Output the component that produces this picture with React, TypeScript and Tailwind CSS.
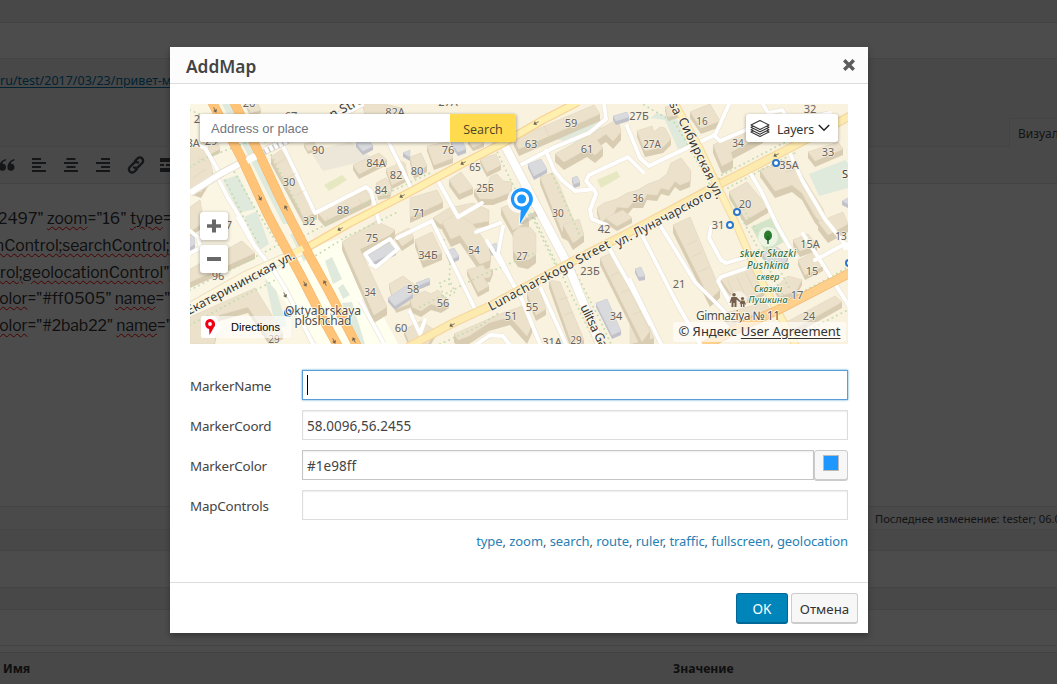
import React from "react";

type Pt = [number, number];

const ROOF = "#ece2cc";
const WALL = "#d8ccb2";
const GRAY_ROOF = "#d9dade";
const GRAY_WALL = "#c0c1c9";

function parse(s: string): Pt[] {
  return s.split(" ").map((p) => p.split(",").map(Number) as Pt);
}

function Building({ points, depth = 5, gray = false }: { points: string; depth?: number; gray?: boolean }) {
  const pts = parse(points);
  const wall = gray ? GRAY_WALL : WALL;
  return (
    <g>
      {pts.map(([x, y], i) => {
        const [nx, ny] = pts[(i + 1) % pts.length];
        return (
          <polygon
            key={i}
            points={`${x},${y} ${nx},${ny} ${nx},${ny + depth} ${x},${y + depth}`}
            fill={nx < x ? wall : gray ? "#cbccd2" : "#e0d5bd"}
          />
        );
      })}
      <polygon points={points} fill={gray ? GRAY_ROOF : ROOF} stroke={gray ? "#cdced4" : "#e2d7c0"} strokeWidth="0.5" />
    </g>
  );
}

const buildings: [string, number][] = [
  ["190,147 204,142 213,172 201,192 190,188", 6],
  ["208,141 217,139 220,149 210,154", 4],
  ["190,207 200,200 204,222 190,232", 5],
  ["246,104 258,104 261,110 250,113", 3],
  ["271,157 281,150 317,212 304,218", 7],
  ["304,144 314,142 317,148 308,151", 3],
  ["318,213 366,190 371,199 325,221", 6],
  ["353,165 379,153 387,160 359,174", 5],
  ["376,183 386,178 392,186 390,194 378,196", 4],
  ["386,169 396,165 398,160 405,163 408,177 392,185", 4],
  ["363,104 385,104 401,108 401,114 365,114", 3],
  ["427,146 448,142 453,158 434,165", 5],
  ["468,140 480,137 484,143 473,147", 4],
  ["410,157 421,153 427,166 414,173", 6],
  ["410,198 437,190 443,202 410,217", 6],
  ["433,218 449,208 473,203 489,210 489,221 460,226 440,224", 5],
  ["449,180 461,172 473,188 459,194", 6],
  ["480,159 496,154 501,165 487,172", 5],
  ["474,190 488,184 490,177 497,174 503,181 512,182 511,192 493,199 480,199", 6],
  ["514,139 594,105 600,114 519,149", 7],
  ["555,154 618,119 621,132 613,141 606,134 597,140 603,148 595,155 587,149 564,162", 8],
  ["540,177 552,173 558,182 575,224 574,237 562,231", 7],
  ["501,208 516,202 529,221 513,230", 7],
  ["597,208 604,203 617,199 627,193 638,190 648,184 659,180 667,174 671,163 681,158 691,171 690,181 680,185 675,181 669,190 661,188 657,195 647,194 643,202 633,202 628,208 617,207 612,217 601,221", 6],
  ["637,131 652,126 654,132 660,127 665,128 671,139 663,147 645,151", 6],
  ["690,112 710,104 720,121 701,128", 6],
  ["665,107 673,105 678,114 668,117", 4],
  ["713,145 747,128 763,135 731,152 733,160 722,166", 8],
  ["808,152 838,142 843,149 815,161", 6],
  ["782,132 795,123 802,128 791,139", 4],
  ["760,170 784,160 799,170 823,209 830,233 815,216 802,193 792,185 775,191", 7],
  ["729,192 747,182 768,207 746,220", 6],
  ["818,222 843,212 848,224 828,235", 8],
  ["793,240 808,234 817,245 800,251", 6],
  ["798,260 815,252 823,266 805,275", 5],
  ["775,288 788,276 802,280 796,291 780,296", 5],
  ["783,324 835,296 842,302 790,331", 6],
  ["720,278 750,266 764,292 738,303", 4],
  ["722,314 765,302 770,309 730,322", 5],
  ["673,225 690,217 720,290 710,299", 8],
  ["630,303 637,300 654,338 630,344", 6],
  ["190,269 242,241 255,253 190,282", 6],
  ["190,317 255,288 283,333 270,340 248,307 219,315 214,344 190,344", 6],
  ["342,242 376,221 395,230 390,235 360,249 387,307 374,315", 8],
  ["395,235 409,228 414,238 402,246", 5],
  ["389,284 403,276 419,288 412,303 396,309", 4],
  ["415,240 432,232 442,253 423,261", 7],
  ["410,297 425,291 431,294 438,290 449,302 441,307 431,304 421,311 412,307", 6],
  ["442,222 457,214 472,223 491,250 490,260 480,264 460,235 451,239", 8],
  ["467,270 483,265 486,270 493,269 490,277 484,278 489,286 478,292", 5],
  ["513,233 519,227 530,227 536,234 536,254 528,260 518,258 513,250", 9],
  ["454,334 500,314 523,306 532,325 527,336 510,317 489,323 469,336 458,340", 8],
  ["527,293 539,288 546,309 536,315", 6],
  ["549,280 560,282 584,340 572,344", 8],
  ["563,225 579,219 584,235 573,243", 7],
  ["605,218 623,210 632,218 617,226", 5],
  ["600,258 611,253 650,331 642,342", 7],
  ["404,330 421,321 436,331 428,344 410,344", 5],
];

const grayBuildings = [
  "356,143 367,138 373,146 363,151",
  "403,153 410,150 410,157",
  "451,142 462,140 466,149 458,152",
  "528,164 541,159 547,169 534,176",
  "572,178 577,176 580,182 574,184",
  "613,116 627,112 629,117 616,121",
  "368,255 389,243 396,251 373,262",
  "388,298 406,286 413,294 395,306",
  "446,251 454,248 459,256 450,260",
  "416,283 429,278 430,281 418,286",
  "489,246 496,243 498,248 492,252",
  "596,303 607,299 621,331 612,335",
  "635,269 641,267 645,276 639,277",
  "190,238 194,235 195,244 190,247",
  "762,253 777,247 788,256 785,262 769,264",
  "842,201 848,198 848,204",
];

const minorRoads = [
  "190,142 205,148 212,160 220,174",
  "218,178 228,198 244,224 254,245 275,272 286,290 313,344",
  "238,218 252,242",
  "283,146 315,213 319,211",
  "317,212 366,187 371,191 379,222",
  "389,143 400,165 412,190",
  "437,179 458,217 482,203",
  "517,167 555,147 589,133 606,119 604,104",
  "546,151 554,170 562,180 575,191 585,190 594,189 596,194 590,210 592,219 607,225",
  "594,190 586,181 589,175 628,157 643,172",
  "627,126 640,158 649,166 674,154 715,135 721,122 729,104",
  "714,135 720,141 762,123",
  "763,104 768,113 782,110 790,121 830,113",
  "788,149 802,180 825,219 848,248",
  "749,171 761,191 777,225 795,257",
  "660,225 695,282 723,310 729,318",
  "642,235 675,300 700,344",
  "630,280 645,311 661,344",
  "711,227 709,238 721,260 726,263 747,257 754,254",
  "730,303 718,281 721,277 747,268",
  "803,234 820,260 849,306",
  "845,244 815,260",
  "848,244 845,248",
  "397,238 432,221 478,315",
  "487,241 520,295 540,344",
  "503,227 498,253 516,290",
  "476,232 500,223",
  "541,289 566,344",
  "609,248 632,289 650,324",
  "360,300 384,344",
  "410,312 420,334 425,320",
  "477,344 490,335 503,336 509,344",
  "190,253 201,248 198,237 190,231",
  "372,264 365,254 390,239 398,249 376,267 371,264",
];

const treeLines = [
  "247,106 266,145 300,211",
  "223,176 246,222 260,246",
  "232,168 253,205 279,246",
  "190,167 205,158 248,142",
  "304,236 344,215 388,193 430,173",
  "312,258 346,237 400,211",
  "190,290 238,266 280,244",
  "190,325 240,298 281,277",
  "420,307 480,276 535,253",
  "440,344 480,326 500,312",
  "491,139 512,183 531,219",
  "535,219 555,261 580,312 596,344",
  "520,191 546,246 560,274",
  "575,271 600,320 611,344",
  "590,252 638,228 700,197",
  "644,105 675,123 702,170 715,195",
  "676,106 706,163 721,181",
  "722,175 770,150 805,132",
  "728,188 765,168 795,153",
  "730,197 759,250 783,295",
  "741,205 768,249 790,289",
  "552,174 566,205 582,240",
  "444,240 450,264 449,288",
  "440,283 449,279 455,292 444,299 440,283",
  "788,299 820,283 848,267",
  "810,329 848,310",
  "190,110 201,115 216,144",
  "800,119 803,142",
];

type Lab = [string, number, number, number?];
const numbers: Lab[] = [
  ["26", 249, 103], ["67", 291, 116], ["2", 197, 119], ["82А", 395, 112], ["27А", 448, 102],
  ["28А", 190, 143], ["29", 211, 141], ["90", 318, 150], ["84А", 376, 163], ["30", 289, 182],
  ["82", 396, 175], ["84", 381, 190], ["88", 343, 210], ["32", 309, 221], ["76", 448, 150],
  ["80", 417, 171], ["65", 475, 167, 10], ["25Б", 485, 188, 10], ["71", 419, 213], ["63", 531, 144],
  ["59", 571, 123], ["61", 587, 149], ["30", 558, 213, 10], ["27Б", 639, 116], ["27А", 652, 144, 10],
  ["16", 702, 121, 10], ["32", 810, 109], ["34", 738, 143, 10], ["33", 828, 152], ["35А", 789, 165],
  ["36", 638, 198, 10], ["20", 745, 204], ["31", 718, 225], ["42", 604, 229], ["15А", 810, 244],
  ["13", 841, 236, 10], ["15", 812, 271], ["17", 797, 295], ["24", 809, 316], ["21", 679, 284],
  ["96", 218, 276], ["7", 229, 225], ["75", 372, 238], ["34Б", 428, 255], ["54", 474, 250, 10],
  ["27", 522, 256, 10], ["23Б", 590, 271], ["34", 370, 292, 10], ["58", 413, 289], ["56", 443, 303],
  ["60", 401, 328], ["51", 511, 316], ["55", 532, 307], ["34", 616, 316], ["31А", 552, 342],
  ["29", 576, 340, 10], ["29", 274, 339, 10],
];

function Circle({ x, y }: { x: number; y: number }) {
  return <circle cx={x} cy={y} r="3" fill="white" stroke="#2b78cc" strokeWidth="2" />;
}

function CityMap() {
  return (
    <svg className="block h-[240px] w-[658px]" viewBox="190 104 658 240" fontFamily="'Noto Sans', sans-serif">
      <rect x="190" y="104" width="658" height="240" fill="#f9f2df" />
      <polygon points="190,104 243,104 370,344 190,344" fill="#fbf5e4" />
      <polygon points="261,272 300,250 342,238 398,344 318,344" fill="#fffff0" />
      <g fill="#dfeadd">
        <polygon points="223,180 238,175 255,209 239,213" />
        <polygon points="244,217 257,211 269,244 260,250" />
        <polygon points="222,104 232,104 292,224 283,224" />
        <polygon points="290,234 300,234 310,252 304,262" />
        <polygon points="325,261 332,257 342,279 333,284" />
        <polygon points="338,288 343,284 350,295 343,299" />
        <polygon points="265,279 276,290 287,326 276,329" />
        <polygon points="342,303 352,302 365,344 354,344" />
        <polygon points="555,139 595,116 602,120 601,130 575,143" />
        <polygon points="657,113 677,119 689,146 678,149 665,120 650,118" />
        <polygon points="809,174 845,160 848,163 848,188 819,196" />
      </g>
      <polygon points="751,227 775,216 788,240 765,252" fill="#d4e4c8" />
      <polygon points="310,151 350,142 374,159 323,171" fill="#ece7d8" />
      <polygon points="324,185 342,175 347,180 329,191" fill="#e6e8c2" />
      <polygon points="597,180 617,171 620,177 601,188" fill="#e6e8c2" />

      <g fill="none" stroke="#ece5d5" strokeWidth="5.2" strokeLinejoin="round">
        {minorRoads.map((r, i) => <polyline key={i} points={r} />)}
      </g>
      {buildings.map(([p, d], i) => <Building key={i} points={p} depth={d} />)}
      {grayBuildings.map((p, i) => <Building key={i} points={p} depth={4} gray />)}
      <g fill="none" stroke="#c3dbae" strokeWidth="2" strokeLinecap="round" strokeDasharray="0 5">
        {treeLines.map((r, i) => <polyline key={i} points={r} />)}
      </g>
      <g fill="none" stroke="#ffffff" strokeWidth="3.8" strokeLinejoin="round" strokeLinecap="round">
        {minorRoads.map((r, i) => <polyline key={i} points={r} />)}
      </g>
      <g stroke="#d8cdb6" strokeWidth="0.5" fill="none">
        <path d="M275 165l10-6M285 179l11-6M295 196l10-6M326 216l5 8M347 204l5 8M359 199l4 8M544 126l5 10M568 116l5 10M198 158l9 4M193 178l13-9M687 245l10-5M692 257l10-5M699 272l10-5M770 168l10-4M785 172l12-3M728 281l7 17M737 277l8 18M746 273l8 17M559 300l9-3M564 315l9-3M611 276l8-4M621 293l9-4M633 315l8-4" />
      </g>

      <g fill="none">
        <polyline points="190,193 220,174 258,154 320,125 363,103" stroke="#e8e1d2" strokeWidth="8" />
        <polyline points="190,193 220,174 258,154 320,125 363,103" stroke="#fff" strokeWidth="6" />
        <path d="M264 152L328 121" stroke="#cfcbc4" strokeWidth="6" strokeDasharray="1.5 3.5" />
        <polyline points="503,142 525,184 567,263 600,344" stroke="#ece5d5" strokeWidth="10" />
        <polyline points="503,142 525,184 567,263 600,344" stroke="#fff" strokeWidth="8" />
        <polyline points="190,307 245,276 303,250" stroke="#ece1c7" strokeWidth="10" />
        <polyline points="190,307 245,276 303,250" stroke="#fff7dd" strokeWidth="8" />
        <polyline points="303,250 350,223 410,192 460,165 505,142 543,120 578,102" stroke="#f7d295" strokeWidth="8.5" />
        <polyline points="303,250 350,223 410,192 460,165 505,142 543,120 578,102" stroke="#fff0b0" strokeWidth="6" />
        <polyline points="408,347 453,323 490,306 577,259 630,232 710,189 757,165 790,148 850,116" stroke="#f4d8a2" strokeWidth="9" />
        <polyline points="408,347 453,323 490,306 577,259 630,232 710,189 757,165 790,148 850,116" stroke="#fdeaae" strokeWidth="6.5" />
        <polyline points="674,102 700,149 718,187 737,226 750,256 763,284 777,310 796,346" stroke="#f5d9a5" strokeWidth="8" />
        <polyline points="674,102 700,149 718,187 737,226 750,256 763,284 777,310 796,346" stroke="#ffefb8" strokeWidth="6" />
        <polyline points="704,346 740,327 780,309 850,273" stroke="#f0b873" strokeWidth="9.5" />
        <polyline points="704,346 740,327 780,309 850,273" stroke="#ffd08b" strokeWidth="8" />
        <g strokeLinejoin="round">
          <polyline points="212,102 243,161 267,213 277,232 300,274 322,317 339,348" stroke="#f2b871" strokeWidth="9.5" />
          <polyline points="212,102 243,161 267,213 277,232 300,274 322,317 339,348" stroke="#ffc477" strokeWidth="8.2" />
          <polyline points="234,102 258,151 280,198 293,224 309,255 331,295 358,348" stroke="#f2b871" strokeWidth="9.5" />
          <polyline points="234,102 258,151 280,198 293,224 309,255 331,295 358,348" stroke="#ffc477" strokeWidth="8.2" />
        </g>
        <path d="M247 161L256 156.500" stroke="#fff" strokeWidth="6" />
        <path d="M294 253L303 248" stroke="#fff0b0" strokeWidth="6" />
      </g>
      <g fill="#6b6354">
        {[[215,110,62],[260,198,62],[286,208,242],[305,284,62],[325,283,242],[334,341,62],[354,340,242],[285,295,62],[340,229,152],[402,196,152],[536,123,152],[463,163,152],[452,325,152],[776,155,152]].map(([x, y, r], i) => (
          <g key={i} transform={`translate(${x} ${y}) rotate(${r})`}>
            <path d="M-3-.4h3v-1.8l3 2.2-3 2.2V.4h-3z" />
          </g>
        ))}
      </g>

      <g fill="#68635c" textAnchor="middle" stroke="#f7f1e3" strokeWidth="1.4" paintOrder="stroke" strokeLinejoin="round">
        {numbers.map(([t, x, y, s], i) => (
          <text key={i} x={x} y={y + 4} fontSize={s ?? 11}>{t}</text>
        ))}
      </g>

      <g fill="#353535" stroke="#fbf5e4" strokeWidth="2" paintOrder="stroke" fontSize="12.5">
        <text transform="translate(332 119) rotate(-27)" textLength="36">n Stre</text>
        <text transform="translate(189 315) rotate(-28)" textLength="121">Екатерининская ул.</text>
        <text transform="translate(491 311) rotate(-28)" textLength="136">Lunacharskogo Street</text>
        <text transform="translate(618 247) rotate(-28)" textLength="107">ул. Луначарского</text>
        <text transform="translate(669 104) rotate(64)" textLength="13">sa</text>
        <text transform="translate(678 120) rotate(64)" textLength="89">Сибирская ул.</text>
        <text transform="translate(580 307) rotate(64)" textLength="52">ulitsa Gaz</text>
        <text x="842" y="178" fontSize="11">S</text>
      </g>
      <Circle x={776} y={163} />
      <Circle x={737} y={212} />
      <Circle x={730} y={225} />
      <Circle x={849} y={263} />
      <Circle x={288} y={313} />
      <g textAnchor="middle" fill="#4d4d4d" stroke="#fffdf2" strokeWidth="1.6" paintOrder="stroke" fontSize="12">
        <text x="323" y="315" textLength="76">Oktyabrskaya</text>
        <text x="323" y="325" textLength="57">ploshchad</text>
        <text x="738" y="320" textLength="84">Gimnaziya № 11</text>
      </g>
      <circle cx="768" cy="237" r="10" fill="#f0f5e7" opacity=".9" />
      <ellipse cx="768" cy="235.5" rx="4" ry="5" fill="#2b7b2c" />
      <path d="M767.3 236h1.4v8h-1.4zM765.7 238l2.3 2 2-2-2 4z" fill="#1e5f26" />
      <g textAnchor="middle" fill="#1c6535" stroke="#f7f5e7" strokeWidth="1.8" paintOrder="stroke" fontStyle="italic" fontSize="10">
        <text x="768" y="257" textLength="56">skver Skazki</text>
        <text x="768" y="269" textLength="42">Pushkina</text>
        <text x="768" y="280" fontSize="9" textLength="23">сквер</text>
        <text x="768" y="292" fontSize="9" textLength="28">Сказки</text>
        <text x="768" y="303" fontSize="9" textLength="39">Пушкина</text>
      </g>
      <circle cx="738" cy="300" r="9" fill="#f8f3e7" opacity=".85" />
      <g fill="#765f4d">
        <circle cx="734" cy="294.7" r="1.8" />
        <path d="M731.5 297h5l4 4-1 1-3-2.5v7.5h-2v-4h-1v4h-2v-6l-1 2h-1z" />
        <circle cx="742.5" cy="298.5" r="1.6" />
        <path d="M740.5 300.5h4l1.500 4h-1l-.5-1v3.500h-1.400v-3h-1v3h-1.400v-3.500l-1 .5z" />
      </g>
      <path d="M519.5 224.5L521 212A11.5 11.5 0 1 1 527.5 209C526 213 523 219 519.5 224.5z" fill="#fff" opacity=".8" stroke="#fff" strokeWidth="2" />
      <path d="M519.8 224L535 211l3 5-14 8z" fill="#716a56" opacity=".25" />
      <path d="M519.8 224L520.8 210A11 11 0 1 1 530 206.5C527.5 211 524 217 519.8 224z" fill="#1e98ff" />
      <circle cx="521.6" cy="199" r="7.6" fill="#fff" />
      <circle cx="521.6" cy="199" r="4.5" fill="#1e98ff" />
    </svg>
  );
}

function MapPanel() {
  return (
    <div className="relative h-[240px] w-[658px] overflow-hidden">
      <CityMap />
      <div className="absolute left-[10px] top-[10px] flex h-7 w-[316px] rounded-[3px] shadow-[0_1px_3px_1px_rgba(0,0,0,0.25)]">
        <div className="flex h-7 w-[250px] items-center rounded-l-[2px] bg-white pl-[11px] pt-[2px] font-['Liberation_Sans',sans-serif] text-[13px] text-[#6f7781]">Address or place</div>
        <button className="flex h-7 w-[66px] items-center justify-center rounded-r-[3px] bg-[#ffdb4d] pt-[4px] font-['Open_Sans',sans-serif] text-[12.5px] text-[#4c4326]">Search</button>
      </div>
      <button className="absolute left-[556px] top-[10px] flex h-7 w-[92px] items-center rounded-[3px] bg-white pl-1 text-[12.5px] text-[#333] shadow-[0_1px_3px_1px_rgba(0,0,0,0.2)]">
        <svg className="h-5 w-5" viewBox="0 0 20 20" fill="white" stroke="#333" strokeWidth="1.1" strokeLinejoin="round">
          <path d="M1 14l9-4.500 9 4.500-9 4.500z" />
          <path d="M1 11.700l9-4.500 9 4.500-9 4.500z" />
          <path d="M1 9.300l9-4.500 9 4.500-9 4.500z" />
          <path d="M1 7l9-4.500L19 7l-9 4.500z" />
        </svg>
        <span className="ml-[7px] pt-[4px] tracking-[-0.2px]">Layers</span>
        <svg className="ml-[4px] h-3 w-3" viewBox="0 0 12 12" fill="none" stroke="#222" strokeWidth="1.5"><path d="M.8 3L6 8.200 11.200 3" /></svg>
      </button>
      <button className="absolute left-[10px] top-[108px] flex h-7 w-7 items-center justify-center rounded-[3px] bg-white shadow-[0_1px_3px_1px_rgba(0,0,0,0.2)]">
        <svg className="h-[14px] w-[14px]" viewBox="0 0 14 14" fill="#686868"><path d="M0 5h5V0h4v5h5v4H9v5H5V9H0z" transform="translate(0 .5) scale(1 .93)" /></svg>
      </button>
      <button className="absolute left-[10px] top-[141px] flex h-7 w-7 items-center justify-center rounded-[3px] bg-white shadow-[0_1px_3px_1px_rgba(0,0,0,0.2)]">
        <span className="h-1 w-[14px] bg-[#686868]" />
      </button>
      <div className="absolute left-[11px] top-[212px] flex h-[22px] w-[90px] items-center rounded-[3px] bg-white/60">
        <svg className="h-[22px] w-[21px] shrink-0" viewBox="0 0 21 22">
          <path d="M2 0h12l6 11-6 11H2Q0 22 0 20V2Q0 0 2 0z" fill="#fff" />
          <path d="M8.500 19l-.4-6A5 5 0 1 1 12.800 11.500C11.500 14 10 16.500 8.500 19z" fill="#f00012" />
          <circle cx="9" cy="8" r="1.900" fill="#fff" />
        </svg>
        <span className="ml-[9px] font-['Liberation_Sans',sans-serif] text-[11px] leading-none text-black">Directions</span>
      </div>
      <div className="absolute left-[483px] top-[218px] flex h-5 w-[173px] items-center justify-center gap-1 whitespace-nowrap rounded-[3px] bg-white/65 text-[13px] tracking-[-0.03px] text-[#333]">
        <span>© Яндекс</span><span className="underline underline-offset-2">User Agreement</span>
      </div>
    </div>
  );
}

function Spell({ children }: { children: React.ReactNode }) {
  return <span className="underline decoration-[#f00] decoration-wavy decoration-[1px] underline-offset-[2px]">{children}</span>;
}

function AlignIcon({ kind }: { kind: "left" | "center" | "right" }) {
  const x = kind === "left" ? 0 : kind === "center" ? 2.5 : 5;
  return (
    <svg className="h-[14px] w-[14px] shrink-0" viewBox="0 0 14 14" fill="#444a52">
      <path d="M0 4h14v2H0zM0 12h14v2H0z" />
      <rect x={x} y="0" width="9" height="2" />
      <rect x={x} y="8" width="9" height="2" />
    </svg>
  );
}

function EditorPage() {
  return (
    <div className="flex h-full flex-col bg-[#f1f1f1] text-[#444]">
      <div className="h-[23px] shrink-0 border-b border-[#ddd]" />
      <div className="h-[36px] shrink-0 border-b border-[#e3e3e3] bg-white" />
      <div className="flex h-[88px] shrink-0 flex-col justify-between">
        <div className="mt-[12px] whitespace-nowrap text-[12.500px] leading-5 text-[#0073aa] underline underline-offset-2">ru/test/2017/03/23/привет-мир/</div>
        <div className="flex h-[29px]">
          <div className="w-[1009px] border-b border-[#e5e5e5]" />
          <div className="w-[48px] overflow-hidden whitespace-nowrap border-l border-t border-[#e5e5e5] bg-[#f5f5f5] pl-2 pt-[6px] text-[12px] leading-[18px] text-[#444]">Визуально</div>
        </div>
      </div>
      <div className="flex h-[37px] shrink-0 items-center border-b border-[#ddd] bg-[#f5f5f5]">
        <svg className="h-3 w-[15px] shrink-0" viewBox="0 0 15 12" fill="#444a52">
          <path d="M6 0C2 1-1 4-1 8a3.500 3.500 0 1 0 3.500-3.300C2.700 3 4 1.800 6 1.500zM14.500 0C10.500 1 7.500 4 7.500 8a3.500 3.500 0 1 0 3.500-3.300c.2-1.700 1.500-2.900 3.500-3.200z" />
        </svg>
        <div className="ml-[17px] flex gap-[18px]">
          <AlignIcon kind="left" /><AlignIcon kind="center" /><AlignIcon kind="right" />
        </div>
        <svg className="ml-[17px] h-[18px] w-[18px] shrink-0" viewBox="0 0 18 18" fill="none" stroke="#444a52" strokeWidth="2.400" strokeLinecap="round">
          <path d="M8 5l2.500-2.500a3.200 3.200 0 0 1 4.700 4.500L11 11.200a3.200 3.200 0 0 1-4 .2M10 13l-2.500 2.500a3.200 3.200 0 0 1-4.700-4.500L7 6.800a3.200 3.200 0 0 1 4-.2" />
        </svg>
        <svg className="ml-[15px] h-[14px] w-4 shrink-0" viewBox="0 0 16 14" fill="#444a52">
          <path d="M0 0h16v4H0zM0 6h4v2H0zM6 6h4v2H6zM12 6h4v2h-4zM0 10h16v4H0z" />
        </svg>
      </div>
      <div className="h-[322px] shrink-0 whitespace-nowrap bg-white pt-[22px] font-['Libre_Franklin','Inter',sans-serif] text-[15.700px] leading-[26.800px] text-[#333]">
        <div className="-ml-[2px]">2497" <Spell>zoom</Spell>="16" <Spell>type</Spell>="map"</div>
        <div className="-ml-[5px]"><Spell>nControl;searchControl;</Spell></div>
        <div className="-ml-[6px]"><Spell>trol;geolocationControl</Spell>"]</div>
        <div className="-ml-[9px] tracking-[-0.1px]"><Spell>color</Spell>="#ff0505" <Spell>name</Spell>="one"</div>
        <div className="-ml-[9px] tracking-[-0.1px]"><Spell>color</Spell>="#2bab22" <Spell>name</Spell>="two"</div>
      </div>
      <div className="flex h-[24px] shrink-0 items-center whitespace-nowrap border-y border-[#e5e5e5] bg-[#f7f7f7] pl-[875px] pt-[2px] text-[11.150px] leading-none text-[#444]">Последнее изменение: tester; 06.04.2017</div>
      <div className="h-[20px] shrink-0" />
      <div className="h-[38px] shrink-0 border-y border-[#e3e3e3] bg-white" />
      <div className="h-[21px] shrink-0" />
      <div className="h-[37px] shrink-0 border-y border-[#e3e3e3] bg-white" />
      <div className="h-[6px] shrink-0 bg-[#fdfdfd]" />
      <div className="flex h-[32px] shrink-0 items-center border-t border-[#ddd] bg-[#f0f0f0] pt-[2px] text-[12.200px] font-bold text-[#333]">
        <span className="w-[670px] pl-[3px]">Имя</span><span className="pl-[3px]">Значение</span>
      </div>
    </div>
  );
}

function Row({ label, children }: { label: string; children: React.ReactNode }) {
  return (
    <div className="flex h-[30px] items-center">
      <label className="w-[112px] pt-[3px] text-[13.400px] tracking-[-0.2px] text-[#444]">{label}</label>
      <div className="flex w-[546px]">{children}</div>
    </div>
  );
}

const fieldText = "flex h-[30px] items-center border bg-white px-1 pt-[2px] text-[13.500px] tracking-[0.05px] text-[#444] shadow-[inset_0_1px_2px_rgba(0,0,0,0.07)]";

export default function App() {
  const controls = ["type", "zoom", "search", "route", "ruler", "traffic", "fullscreen", "geolocation"];
  return (
    <div className="relative h-[684px] w-[1057px] overflow-hidden font-['Noto_Sans',sans-serif]">
      <EditorPage />
      <div className="absolute inset-0 bg-black/70" />
      <div className="absolute left-[170px] top-[47px] flex h-[586px] w-[698px] flex-col bg-white shadow-[0_3px_6px_rgba(0,0,0,0.3)]">
        <div className="flex h-[37px] shrink-0 items-center justify-between border-b border-[#ddd] bg-[#fcfcfc] pl-4 pr-[13px]">
          <h1 className="pt-[4px] text-[17.300px] font-semibold text-[#444]">AddMap</h1>
          <svg className="h-3 w-3" viewBox="0 0 12 12" stroke="#5c5c5c" strokeWidth="3.400"><path d="M1.200 1.200l9.600 9.600M10.800 1.200L1.200 10.800" /></svg>
        </div>
        <div className="flex grow flex-col px-5 pt-5">
          <MapPanel />
          <div className="mt-[26px] flex flex-col gap-[10px]">
            <Row label="MarkerName">
              <div className="flex h-[30px] w-full items-center border border-[#5b9dd9] px-1 shadow-[0_0_2px_rgba(30,140,190,0.8)]">
                <span className="h-5 w-px bg-black" />
              </div>
            </Row>
            <Row label="MarkerCoord"><div className={`w-full border-[#ddd] ${fieldText}`}>58.0096,56.2455</div></Row>
            <Row label="MarkerColor">
              <div className={`w-[512px] border-[#c5c5c5] ${fieldText}`}>#1e98ff</div>
              <button className="flex h-[30px] w-[34px] justify-center rounded-[3px] border border-[#ccc] bg-[#f7f7f7] pt-1 shadow-[0_1px_0_#ccc]">
                <span className="h-4 w-4 border border-[#bbb] bg-[#1e98ff]" />
              </button>
            </Row>
            <Row label="MapControls"><div className={`w-full border-[#ddd] ${fieldText}`} /></Row>
          </div>
          <div className="mt-[11px] flex justify-end whitespace-pre text-[13px] leading-5 tracking-[-0.070px] text-[#555]">
            {controls.map((c, i) => (
              <span key={c}><a className="text-[#2680b5]">{c}</a>{i < controls.length - 1 ? ", " : ""}</span>
            ))}
          </div>
        </div>
        <div className="flex h-[51px] shrink-0 justify-end gap-[3px] border-t border-[#ddd] pr-[10px] pt-[10px]">
          <button className="flex h-[31px] w-[52px] items-center justify-center rounded-[3px] border border-b-2 border-[#006799] bg-[#0085ba] pt-[3px] text-[13.500px] text-white">OK</button>
          <button className="flex h-[31px] w-[67px] items-center justify-center rounded-[3px] border border-b-2 border-[#ccc] bg-[#f7f7f7] pt-[3px] text-[13.300px] text-[#333]">Отмена</button>
        </div>
      </div>
    </div>
  );
}
